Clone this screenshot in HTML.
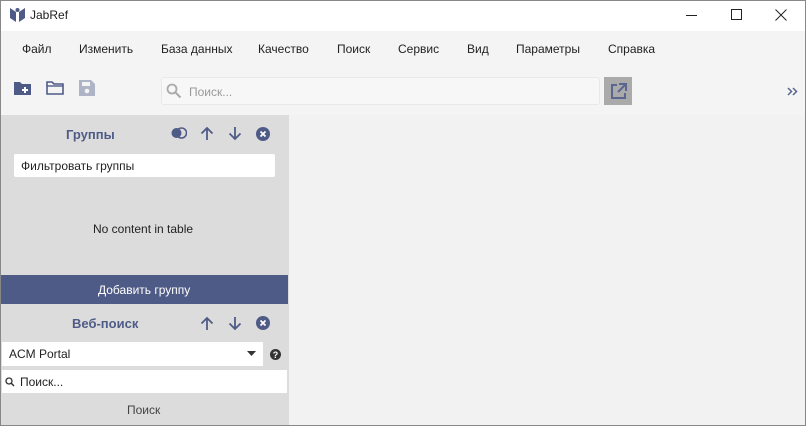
<!DOCTYPE html>
<html><head><meta charset="utf-8"><style>
*{margin:0;padding:0;box-sizing:border-box}
body{width:806px;height:426px;overflow:hidden;background:#f4f4f4;font-family:"Liberation Sans","Noto Sans CJK SC",sans-serif;font-size:12px;color:#222;position:relative}
.a{position:absolute}
.win{border:1px solid #888;position:absolute;left:0;top:0;width:806px;height:426px;pointer-events:none}
.menu span{position:absolute;top:42px;font-size:12px}
.t{color:#4f5b87;font-weight:bold}
</style></head><body>
<div class="a" style="left:0;top:0;width:806px;height:31px;background:#fff"></div>
<svg class="a" style="left:9px;top:7px" width="17" height="16" viewBox="0 0 17 16"><path d="M1 1l6 4v10l-6-4z M16 1l-6 4v10l6-4z" fill="#4f5b87"/><circle cx="8.5" cy="3" r="2" fill="#4f5b87"/></svg>
<div class="a" style="left:30px;top:8px;font-size:12px">JabRef</div>
<div class="a" style="left:686px;top:15px;width:11px;height:1px;background:#222"></div>
<div class="a" style="left:731px;top:9px;width:11px;height:11px;border:1px solid #222"></div>
<svg class="a" style="left:775px;top:9px" width="12" height="12"><path d="M0.5 0.5l11 11M11.5 0.5l-11 11" stroke="#222" stroke-width="1"/></svg>
<div class="menu">
<span style="left:22px">Файл</span><span style="left:79px">Изменить</span><span style="left:161px">База данных</span><span style="left:258px">Качество</span><span style="left:337px">Поиск</span><span style="left:398px">Сервис</span><span style="left:467px">Вид</span><span style="left:516px">Параметры</span><span style="left:608px">Справка</span>
</div>
<svg class="a" style="left:14px;top:80px" width="18" height="16"><path d="M0 2h6l2 2h9v11H0z" fill="#4f5b87"/><path d="M11 7v6M8 10h6" stroke="#fff" stroke-width="2"/></svg>
<svg class="a" style="left:46px;top:80px" width="18" height="16"><path d="M1 2h5l2 2h9v10H1z" fill="none" stroke="#4f5b87" stroke-width="1.6"/><path d="M1 6h16" stroke="#4f5b87" stroke-width="1.4"/></svg>
<svg class="a" style="left:79px;top:80px" width="16" height="16"><path d="M0 0h12l4 4v12H0z" fill="#aeb3c6"/><rect x="3" y="2" width="8" height="4" fill="#f4f4f4"/><circle cx="8" cy="11" r="2.3" fill="#f4f4f4"/></svg>
<div class="a" style="left:161px;top:77px;width:439px;height:28px;background:#f7f7f7;border:1px solid #e8e8e8;border-radius:3px"></div>
<svg class="a" style="left:166px;top:83px" width="16" height="16"><circle cx="6" cy="6" r="4.5" fill="none" stroke="#aaa" stroke-width="1.8"/><path d="M9.5 9.5l5 5" stroke="#aaa" stroke-width="2"/></svg>
<div class="a" style="left:189px;top:85px;color:#999">Поиск...</div>
<div class="a" style="left:604px;top:77px;width:28px;height:28px;background:#aaa"></div>
<svg class="a" style="left:610px;top:83px" width="17" height="17"><path d="M7 2H2v13h13v-5" fill="none" stroke="#5a6590" stroke-width="2"/><path d="M9 1h7v7M16 1L8 9" fill="none" stroke="#5a6590" stroke-width="2"/></svg>
<svg class="a" style="left:787px;top:87px" width="11" height="9"><path d="M1 1l3.5 3.5L1 8M6 1l3.5 3.5L6 8" fill="none" stroke="#5a6590" stroke-width="1.5"/></svg>
<div class="a" style="left:0;top:115px;width:806px;height:311px;background:#f2f2f2"></div>
<div class="a" style="left:0;top:115px;width:289px;height:311px;background:#dcdcdc"></div>
<div class="a t" style="left:66px;top:127px;font-size:13px">Группы</div>
<svg class="a" style="left:171px;top:127px" width="16" height="12"><circle cx="5.5" cy="6" r="5" fill="#4f5b87"/><circle cx="10.5" cy="6" r="5" fill="none" stroke="#4f5b87" stroke-width="1.6"/></svg>
<svg id="up" class="a" style="left:200px;top:126px" width="14" height="15"><path d="M7 14V2M1.5 7.5L7 2l5.5 5.5" fill="none" stroke="#4f5b87" stroke-width="1.8"/></svg>
<svg class="a" style="left:228px;top:126px" width="14" height="15"><path d="M7 1v12M1.5 7.5L7 13l5.5-5.5" fill="none" stroke="#4f5b87" stroke-width="1.8"/></svg>
<svg class="a" style="left:256px;top:127px" width="14" height="14"><circle cx="7" cy="7" r="7" fill="#4f5b87"/><path d="M4.5 4.5l5 5M9.5 4.5l-5 5" stroke="#fff" stroke-width="1.8"/></svg>
<div class="a" style="left:14px;top:154px;width:261px;height:23px;background:#fff;border-radius:2px"></div>
<div class="a" style="left:21px;top:159px">Фильтровать группы</div>
<div class="a" style="left:93px;top:222px">No content in table</div>
<div class="a" style="left:0;top:275px;width:288px;height:29px;background:#4f5b87"></div>
<div class="a" style="left:98px;top:283px;color:#fff">Добавить группу</div>
<div class="a t" style="left:72px;top:316px;font-size:13px">Веб-поиск</div>
<svg class="a" style="left:200px;top:316px" width="14" height="15"><path d="M7 14V2M1.5 7.5L7 2l5.5 5.5" fill="none" stroke="#4f5b87" stroke-width="1.8"/></svg>
<svg class="a" style="left:228px;top:316px" width="14" height="15"><path d="M7 1v12M1.5 7.5L7 13l5.5-5.5" fill="none" stroke="#4f5b87" stroke-width="1.8"/></svg>
<svg class="a" style="left:256px;top:316px" width="14" height="14"><circle cx="7" cy="7" r="7" fill="#4f5b87"/><path d="M4.5 4.5l5 5M9.5 4.5l-5 5" stroke="#fff" stroke-width="1.8"/></svg>
<div class="a" style="left:2px;top:342px;width:261px;height:24px;background:#fff"></div>
<div class="a" style="left:9px;top:347px">ACM Portal</div>
<svg class="a" style="left:247px;top:351px" width="9" height="5"><path d="M0 0h9L4.5 5z" fill="#333"/></svg>
<svg class="a" style="left:270px;top:349px" width="11" height="11"><circle cx="5.5" cy="5.5" r="5.5" fill="#333"/><text x="5.5" y="9" font-size="9" font-weight="bold" fill="#fff" text-anchor="middle" font-family="Liberation Sans">?</text></svg>
<div class="a" style="left:2px;top:370px;width:285px;height:23px;background:#fff"></div>
<svg class="a" style="left:5px;top:377px" width="10" height="10"><circle cx="4" cy="4" r="3" fill="none" stroke="#333" stroke-width="1.3"/><path d="M6 6l3 3" stroke="#333" stroke-width="1.5"/></svg>
<div class="a" style="left:20px;top:375px">Поиск...</div>
<div class="a" style="left:127px;top:403px;color:#444">Поиск</div>
<div class="win"></div>
</body></html>
